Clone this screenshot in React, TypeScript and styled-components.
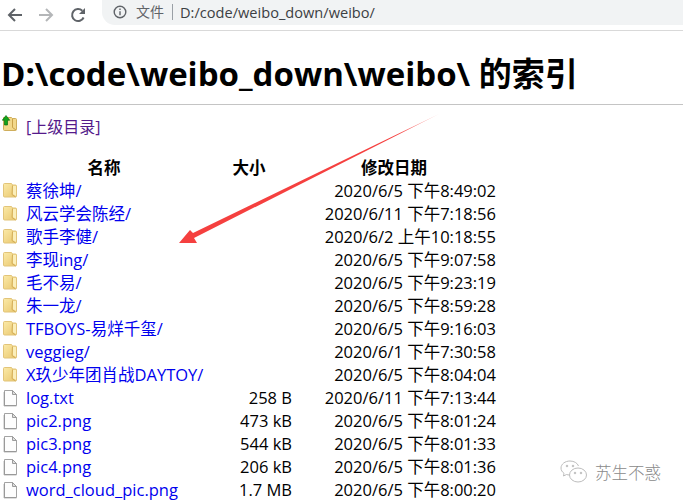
import React from 'react';
import styled, { createGlobalStyle } from 'styled-components';

const GlobalStyle = createGlobalStyle`
  html, body {
    margin: 0;
    background: #fff;
  }
  body {
    width: 683px;
    height: 500px;
    overflow: hidden;
    font-family: "Open Sans", "Noto Sans CJK SC", sans-serif;
  }
`;

const Page = styled.div`
  position: relative;
  width: 683px;
  height: 500px;
  overflow: hidden;
`;

const Toolbar = styled.div`
  display: flex;
  align-items: center;
  height: 30px;
  border-bottom: 1px solid #d9d9d9;
  padding-left: 7px;
`;

const NavButton = styled.div`
  display: flex;
  width: 32px;
  color: #5f6368;
`;

const Omnibox = styled.div`
  display: flex;
  align-items: center;
  height: 26px;
  margin: -6px 0 0 1px;
  padding-left: 11px;
  width: 582px;
  background: #f1f3f4;
  border-radius: 0 0 0 13px;
  font-size: 14.6px;
  color: #3c4043;
`;

const Scheme = styled.span`
  margin-left: 9px;
  padding-right: 8px;
  font-size: 14px;
  color: #5f6368;
  border-right: 1px solid #9aa0a6;
  line-height: 16px;
`;

const Address = styled.span`
  margin-left: 7px;
`;

const Content = styled.div`
  padding: 0 0 0 2px;
`;

const Title = styled.h1`
  margin: 0 0 0 -1px;
  padding-top: 19px;
  height: 54px;
  font-size: 33px;
  line-height: 48px;
  font-weight: 700;
  color: #000;
  white-space: nowrap;
`;

const Rule = styled.div`
  height: 1px;
  margin-left: -2px;
  background: #c4c4c4;
`;

const ParentRow = styled.div`
  display: flex;
  align-items: flex-start;
  height: 41px;
  padding-top: 10px;
`;

const ParentLink = styled.a`
  margin-left: 8px;
  font-size: 16px;
  line-height: 22px;
  margin-top: 1px;
  color: #551a8b;
`;

const Table = styled.table`
  border-collapse: collapse;
  table-layout: fixed;
  width: 494px;
  font-size: 16.5px;
  line-height: 23px;
`;

const HeadCell = styled.th<{ $w: number }>`
  width: ${p => p.$w}px;
  height: 22px;
  padding: 0;
  font-weight: 700;
  text-align: center;
  color: #000;
`;

const Row = styled.tr`
  height: 23px;
`;

const NameCell = styled.td`
  padding: 0;
  white-space: nowrap;
`;

const NameInner = styled.div`
  display: flex;
  align-items: center;
  gap: 8px;
  height: 23px;
`;

const FileLink = styled.a`
  color: #0000ee;
`;

const DetailCell = styled.td`
  padding: 0;
  text-align: right;
  white-space: nowrap;
  color: #000;
`;

const ArrowOverlay = styled.svg`
  position: absolute;
  left: 0;
  top: 0;
  pointer-events: none;
`;

const Watermark = styled.div`
  position: absolute;
  left: 560px;
  top: 459px;
  display: flex;
  align-items: center;
  gap: 7px;
  font-size: 16.5px;
  color: #8a8a8a;
  font-weight: 300;
`;

const FolderIcon = () => (
  <svg width="16" height="17" viewBox="0 0 16 17" style={{ flex: 'none' }}>
    <defs>
      <linearGradient id="folderBody" x1="0" y1="0" x2="1" y2="1">
        <stop offset="0" stopColor="#fbeaa8" />
        <stop offset="1" stopColor="#e9c66d" />
      </linearGradient>
    </defs>
    <path d="M1.500 2.500c0-.6.4-1 1-1h7l1 1.500h3c.6 0 1 .4 1 1v10c0 .6-.4 1-1 1h-11c-.6 0-1-.4-1-1z" fill="url(#folderBody)" stroke="#e2c479" />
    <path d="M10.500 3.500l-.5 9 3.500 2.500" fill="none" stroke="#d2ad58" />
    <path d="M11 4h3v10l-3-1.800z" fill="#fbeeb9" />
  </svg>
);

const FileIcon = () => (
  <svg width="16" height="18" viewBox="0 0 16 18" style={{ flex: 'none' }}>
    <path d="M2.500 1.500h8l4 4v11h-12z" fill="#fdfdfd" stroke="#a3a3a3" />
    <path d="M10.500 1.500v4h4z" fill="#dedede" stroke="#9c9c9c" />
    <path d="M2 3v14h12.500" fill="none" stroke="#7d7d7d" strokeOpacity=".5" />
  </svg>
);

const UpIcon = () => (
  <svg width="16" height="17" viewBox="0 0 16 17" style={{ flex: 'none' }}>
    <path d="M1.500 2.500h8l1 1h3c.6 0 1 .4 1 1v10c0 .6-.4 1-1 1h-11c-.6 0-1-.4-1-1z" fill="#f3d88a" stroke="#cfae5c" />
    <path d="M10.500 3.500v9l3.500 2.500" fill="none" stroke="#c9a24a" />
    <path d="M4 0.500L0.300 5.200h2.200V10h3V5.200h2.200z" fill="#12a51a" stroke="#0b6f11" strokeWidth=".7" />
  </svg>
);

const BackIcon = ({ color }: { color: string }) => (
  <svg width="16" height="16" viewBox="0 0 16 16" fill="none" stroke={color} strokeWidth="2">
    <path d="M15 8H2M8 2L2 8l6 6" />
  </svg>
);

const ForwardIcon = ({ color }: { color: string }) => (
  <svg width="16" height="16" viewBox="0 0 16 16" fill="none" stroke={color} strokeWidth="2">
    <path d="M1 8h13M8 2l6 6-6 6" />
  </svg>
);

const ReloadIcon = () => (
  <svg width="16" height="16" viewBox="0 0 16 16" fill="none">
    <path d="M13.600 10.500A6 6 0 1 1 12.300 3.800" stroke="#5f6368" strokeWidth="2" />
    <path d="M15 1v6H9z" fill="#5f6368" />
  </svg>
);

const InfoIcon = () => (
  <svg width="14" height="14" viewBox="0 0 14 14" fill="none">
    <circle cx="7" cy="7" r="5.800" stroke="#5f6368" strokeWidth="1.400" />
    <path d="M7 6.200v4M7 3.600v1.400" stroke="#5f6368" strokeWidth="1.400" />
  </svg>
);

const WeChatIcon = () => (
  <svg width="28" height="26" viewBox="0 0 28 26" fill="none" stroke="#bdbdbd" strokeWidth="1">
    <path d="M10 2c-5 0-9 3.200-9 7 0 2.200 1.200 4 3 5.300L3.500 17l3-1.500c1 .3 2 .5 3 .5" />
    <path d="M10 2c4 0 7.500 2 8.500 5" />
    <ellipse cx="18" cy="16" rx="8.500" ry="7" />
    <circle cx="7" cy="7" r=".8" fill="#bdbdbd" />
    <circle cx="13" cy="7" r=".8" fill="#bdbdbd" />
    <circle cx="15" cy="14" r=".8" fill="#bdbdbd" />
    <circle cx="21" cy="14" r=".8" fill="#bdbdbd" />
  </svg>
);

type Entry = { name: string; size?: string; date: string; folder?: boolean };

const entries: Entry[] = [
  { name: '蔡徐坤/', date: '2020/6/5 下午8:49:02', folder: true },
  { name: '风云学会陈经/', date: '2020/6/11 下午7:18:56', folder: true },
  { name: '歌手李健/', date: '2020/6/2 上午10:18:55', folder: true },
  { name: '李现ing/', date: '2020/6/5 下午9:07:58', folder: true },
  { name: '毛不易/', date: '2020/6/5 下午9:23:19', folder: true },
  { name: '朱一龙/', date: '2020/6/5 下午8:59:28', folder: true },
  { name: 'TFBOYS-易烊千玺/', date: '2020/6/5 下午9:16:03', folder: true },
  { name: 'veggieg/', date: '2020/6/1 下午7:30:58', folder: true },
  { name: 'X玖少年团肖战DAYTOY/', date: '2020/6/5 下午8:04:04', folder: true },
  { name: 'log.txt', size: '258 B', date: '2020/6/11 下午7:13:44' },
  { name: 'pic2.png', size: '473 kB', date: '2020/6/5 下午8:01:24' },
  { name: 'pic3.png', size: '544 kB', date: '2020/6/5 下午8:01:33' },
  { name: 'pic4.png', size: '206 kB', date: '2020/6/5 下午8:01:36' },
  { name: 'word_cloud_pic.png', size: '1.7 MB', date: '2020/6/5 下午8:00:20' },
];

export default function App() {
  return (
    <Page>
      <GlobalStyle />
      <Toolbar>
        <NavButton><BackIcon color="#5f6368" /></NavButton>
        <NavButton><ForwardIcon color="#b4b6b8" /></NavButton>
        <NavButton><ReloadIcon /></NavButton>
        <Omnibox>
          <InfoIcon />
          <Scheme>文件</Scheme>
          <Address>D:/code/weibo_down/weibo/</Address>
        </Omnibox>
      </Toolbar>
      <Content>
        <Title>D:\code\weibo_down\weibo\ 的索引</Title>
        <Rule />
        <ParentRow>
          <UpIcon />
          <ParentLink>[上级目录]</ParentLink>
        </ParentRow>
        <Table>
          <thead>
            <tr>
              <HeadCell $w={204}>名称</HeadCell>
              <HeadCell $w={86}>大小</HeadCell>
              <HeadCell $w={204}>修改日期</HeadCell>
            </tr>
          </thead>
          <tbody>
            {entries.map(e => (
              <Row key={e.name}>
                <NameCell>
                  <NameInner>
                    {e.folder ? <FolderIcon /> : <FileIcon />}
                    <FileLink>{e.name}</FileLink>
                  </NameInner>
                </NameCell>
                <DetailCell>{e.size}</DetailCell>
                <DetailCell>{e.date}</DetailCell>
              </Row>
            ))}
          </tbody>
        </Table>
      </Content>
      <ArrowOverlay width="683" height="500" viewBox="0 0 683 500">
        <defs>
          <linearGradient id="arrowFade" gradientUnits="userSpaceOnUse" x1="439" y1="114" x2="400" y2="133">
            <stop offset="0" stopColor="#f5403f" stopOpacity=".35" />
            <stop offset="1" stopColor="#f5403f" />
          </linearGradient>
        </defs>
        <path d="M439 114L193 233 190 230 179 243 197 243 194 238z" fill="url(#arrowFade)" />
      </ArrowOverlay>
      <Watermark>
        <WeChatIcon />
        苏生不惑
      </Watermark>
    </Page>
  );
}
